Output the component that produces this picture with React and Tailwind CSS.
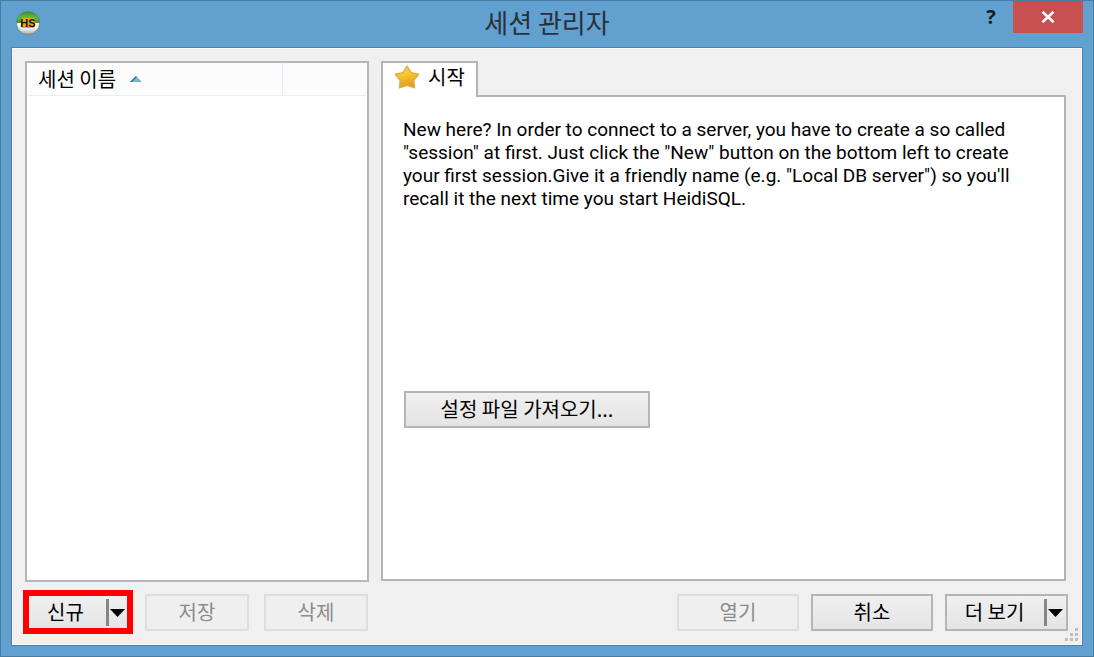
import { useState } from 'react';
import clsx from 'clsx';

function AppLogo() {
  return (
    <svg className="h-6 w-6" viewBox="0 0 24 24" aria-hidden="true">
      <defs>
        <linearGradient id="ball-top" x1="0" y1="0" x2="0" y2="1">
          <stop offset="0" stopColor="#3f8f26" />
          <stop offset="0.5" stopColor="#5fbb35" />
          <stop offset="1" stopColor="#3f9a22" />
        </linearGradient>
        <linearGradient id="ball-bottom" x1="0" y1="0" x2="0" y2="1">
          <stop offset="0" stopColor="#ffffff" />
          <stop offset="0.5" stopColor="#eeeeec" />
          <stop offset="1" stopColor="#a9a9a5" />
        </linearGradient>
      </defs>
      <path d="M0.5 12A11.5 11.5 0 0 0 23.5 12Z" fill="url(#ball-bottom)" />
      <path d="M0.5 12A11.5 11.5 0 0 1 23.5 12Z" fill="url(#ball-top)" />
      <circle cx="12" cy="12" r="11.4" fill="none" stroke="#5d6f5c" strokeWidth="1" opacity="0.6" />
      <rect x="5" y="7" width="14" height="10" rx="2" fill="#f0a41c" />
      <text x="12" y="16" textAnchor="middle" fontSize="11" fontWeight="900" fontFamily="Liberation Sans, sans-serif" fill="#1a1205">
        HS
      </text>
    </svg>
  );
}

function StarIcon() {
  return (
    <svg className="h-6 w-[26px]" viewBox="0 0 26 24" aria-hidden="true">
      <defs>
        <linearGradient id="star-fill" x1="0" y1="0" x2="0.3" y2="1">
          <stop offset="0" stopColor="#f9d84a" />
          <stop offset="0.5" stopColor="#f5c828" />
          <stop offset="1" stopColor="#e59a28" />
        </linearGradient>
      </defs>
      <path
        d="M13 1.2L17 7.6L24.6 9.2L19.8 15.2L20.6 22.8L13 20.4L5.4 22.8L6.2 15.2L1.4 9.2L9 7.6Z"
        fill="url(#star-fill)"
        stroke="#e6ab45"
        strokeWidth="1.4"
        strokeLinejoin="round"
      />
    </svg>
  );
}

function PushButton({ className, disabled, children }) {
  return (
    <button
      type="button"
      disabled={disabled}
      className={clsx(
        'h-[37px] border-2 pb-0.5 text-xl leading-6 whitespace-nowrap',
        disabled
          ? 'border-[#dedede] bg-[#efefef] text-[#8c8c8c]'
          : 'border-[#b5b5b5] bg-linear-to-b from-[#f0f0f0] to-[#e4e4e4] text-black',
        className
      )}
    >
      {children}
    </button>
  );
}

function SplitButton({ className, label }) {
  return (
    <div className={clsx('flex h-[37px] border-2 border-[#b5b5b5] bg-linear-to-b from-[#f0f0f0] to-[#e4e4e4]', className)}>
      <button type="button" className="flex-1 pr-0.5 pb-0.5 text-xl leading-6 whitespace-nowrap">
        {label}
      </button>
      <button type="button" aria-label={`${label} 메뉴`} className="flex w-[22px] items-center">
        <span className="h-[27px] w-[3px] bg-[#868686]" />
        <svg className="ml-px h-2 w-[15px]" viewBox="0 0 15 8" aria-hidden="true">
          <path d="M0 0H15L7.5 8Z" fill="#000" />
        </svg>
      </button>
    </div>
  );
}

function TitleBar() {
  return (
    <header className="grid h-[46px] shrink-0 grid-cols-[1fr_auto_1fr]">
      <div className="pt-[10px] pl-[5px]">
        <AppLogo />
      </div>
      <h1 className="pt-[3px] text-[26px] leading-9 text-[#2b3138]">세션 관리자</h1>
      <div className="flex items-start justify-end">
        <button type="button" aria-label="도움말" className="h-8 w-11 font-['Open_Sans',sans-serif] text-xl leading-8 font-bold text-[#1c1c1c]">
          ?
        </button>
        <button type="button" aria-label="닫기" className="flex h-8 w-[70px] items-center justify-center bg-[#c75050]">
          <svg className="h-3 w-[14px]" viewBox="0 0 14 12" aria-hidden="true">
            <path d="M1.5 0.8L12.5 11.2M12.5 0.8L1.5 11.2" stroke="#fff" strokeWidth="2.6" />
          </svg>
        </button>
      </div>
    </header>
  );
}

function SessionList() {
  return (
    <section className="w-[344px] shrink-0 border-2 border-[#b5b7bd] bg-white px-px">
      <table className="w-full table-fixed">
        <thead>
          <tr className="h-8 border-b border-[#e3effb] bg-[#fcfcfc]">
            <th scope="col" className="w-[254px] border-r border-[#dfeefb] pl-[10px] text-left font-normal">
              <span className="flex items-center gap-[14px] text-xl leading-6">
                세션 이름
                <svg className="h-[6px] w-3" viewBox="0 0 12 6" aria-hidden="true">
                  <path d="M6 0L12 6H0Z" fill="#7db4d2" />
                  <path d="M6 0L0 6H2L6.8 1Z" fill="#3b6d8c" />
                </svg>
              </span>
            </th>
            <td />
          </tr>
        </thead>
      </table>
    </section>
  );
}

function StartTab() {
  return (
    <section className="mr-0.5 mb-px flex min-w-0 flex-1 flex-col">
      <div role="tablist" className="z-10 -mb-0.5 flex">
        <button
          type="button"
          role="tab"
          aria-selected="true"
          className="flex h-9 w-[97px] items-start gap-2 border-2 border-b-0 border-[#b5b5b5] bg-white pt-0.5 pl-[11px] text-xl leading-6"
        >
          <StarIcon />
          시작
        </button>
      </div>
      <div role="tabpanel" className="flex-1 border-2 border-[#b5b5b5] bg-white px-5 pt-[21px]">
        <p className="h-[273px] font-['Roboto',sans-serif] text-[19px] leading-[23px]">
          New here? In order to connect to a server, you have to create a so called
          <br />
          "session" at first. Just click the "New" button on the bottom left to create
          <br />
          your first session.Give it a friendly name (e.g. "Local DB server") so you'll
          <br />
          recall it the next time you start HeidiSQL.
        </p>
        <PushButton className="ml-px w-[246px]">설정 파일 가져오기...</PushButton>
      </div>
    </section>
  );
}

function ResizeGrip() {
  return (
    <svg className="absolute right-1 bottom-1 h-[13px] w-[13px]" viewBox="0 0 13 13" aria-hidden="true">
      <path d="M10 0h3v3h-3zM5 5h3v3h-3zM10 5h3v3h-3zM0 10h3v3h-3zM5 10h3v3h-3zM10 10h3v3h-3z" fill="#bdbdbd" />
    </svg>
  );
}

export default function App() {
  const [sessions] = useState([]);
  const noSession = sessions.length === 0;

  return (
    <div className="flex min-h-screen flex-col border border-[#477ca3] bg-[#61a0cf] px-[10px] pb-[10px] font-['Noto_Sans_CJK_KR',sans-serif] text-black">
      <TitleBar />
      <main className="relative flex flex-1 flex-col border border-[#4585b5] bg-[#f0f0f0]">
        <div className="flex flex-1 flex-col gap-3 border border-[#fafafa] pt-3 pr-[13px] pb-[13px] pl-3">
          <div className="flex flex-1 gap-3">
            <SessionList />
            <StartTab />
          </div>
          <footer className="flex justify-between">
            <div className="flex gap-[15px]">
              <div className="relative">
                <SplitButton className="w-[105px]" label="신규" />
                {/* highlight around the button to press first */}
                <div className="pointer-events-none absolute -top-1 -right-[3px] -bottom-[3px] -left-0.5 border-[6px] border-[#fe0000]" />
              </div>
              <PushButton className="w-[104px]" disabled={noSession}>저장</PushButton>
              <PushButton className="w-[104px]" disabled={noSession}>삭제</PushButton>
            </div>
            <div className="flex gap-3">
              <PushButton className="w-[122px]" disabled={noSession}>열기</PushButton>
              <PushButton className="w-[122px]">취소</PushButton>
              <SplitButton className="w-[123px]" label="더 보기" />
            </div>
          </footer>
        </div>
        <ResizeGrip />
      </main>
    </div>
  );
}
